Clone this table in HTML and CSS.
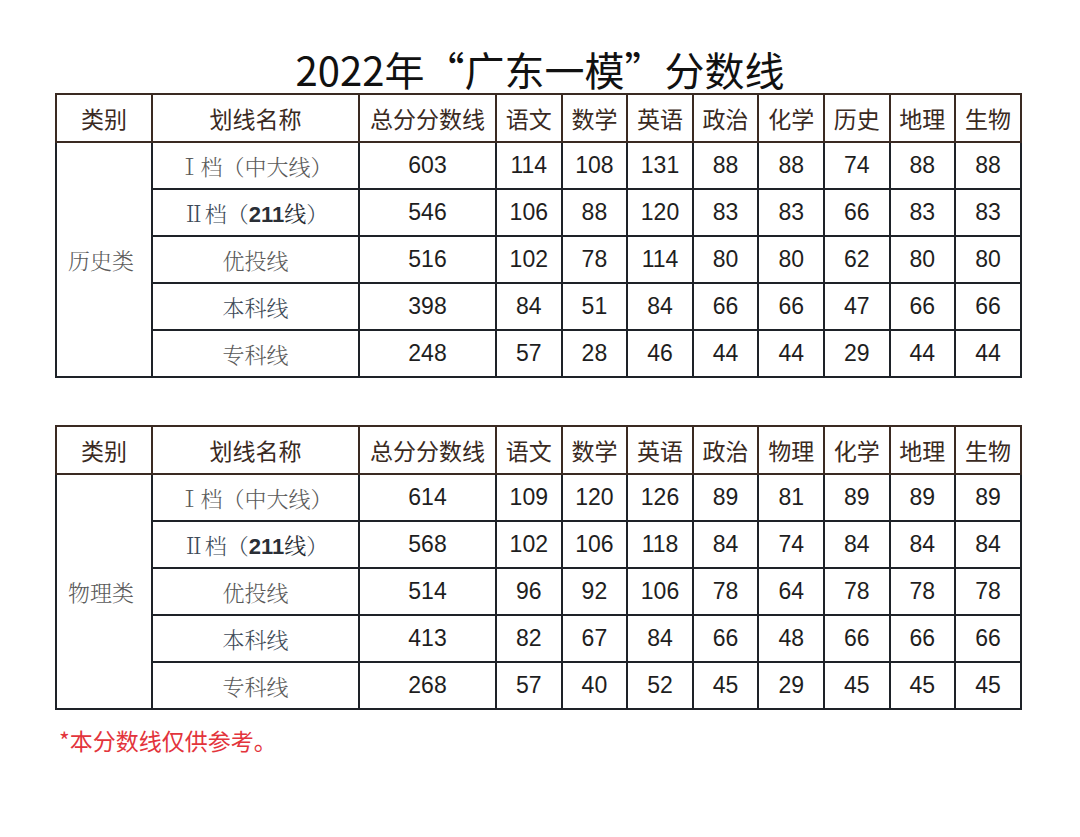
FILE: index.html
```html
<!DOCTYPE html>
<html lang="zh-CN">
<head>
<meta charset="utf-8">
<title>2022年“广东一模”分数线</title>
<link rel="stylesheet" href="styles.css">
</head>
<body>
<div class="page">
  <h1 class="title">2022年“广东一模”分数线</h1>

  <table class="score">
    <colgroup>
      <col class="c-cat"><col class="c-name"><col class="c-total">
      <col class="c-s"><col class="c-s"><col class="c-s"><col class="c-s"><col class="c-s"><col class="c-s"><col class="c-s"><col class="c-s">
    </colgroup>
    <thead>
      <tr><th>类别</th><th>划线名称</th><th>总分分数线</th><th>语文</th><th>数学</th><th>英语</th><th>政治</th><th>化学</th><th>历史</th><th>地理</th><th>生物</th></tr>
    </thead>
    <tbody>
      <tr><td class="cat" rowspan="5">历史类</td><td class="name">Ⅰ档（中大线）</td><td>603</td><td>114</td><td>108</td><td>131</td><td>88</td><td>88</td><td>74</td><td>88</td><td>88</td></tr>
      <tr><td class="name dark">Ⅱ档（<b>211</b><span class="dk">线</span>）</td><td>546</td><td>106</td><td>88</td><td>120</td><td>83</td><td>83</td><td>66</td><td>83</td><td>83</td></tr>
      <tr><td class="name">优投线</td><td>516</td><td>102</td><td>78</td><td>114</td><td>80</td><td>80</td><td>62</td><td>80</td><td>80</td></tr>
      <tr><td class="name dark">本科线</td><td>398</td><td>84</td><td>51</td><td>84</td><td>66</td><td>66</td><td>47</td><td>66</td><td>66</td></tr>
      <tr><td class="name">专科线</td><td>248</td><td>57</td><td>28</td><td>46</td><td>44</td><td>44</td><td>29</td><td>44</td><td>44</td></tr>
    </tbody>
  </table>

  <table class="score second">
    <colgroup>
      <col class="c-cat"><col class="c-name"><col class="c-total">
      <col class="c-s"><col class="c-s"><col class="c-s"><col class="c-s"><col class="c-s"><col class="c-s"><col class="c-s"><col class="c-s">
    </colgroup>
    <thead>
      <tr><th>类别</th><th>划线名称</th><th>总分分数线</th><th>语文</th><th>数学</th><th>英语</th><th>政治</th><th>物理</th><th>化学</th><th>地理</th><th>生物</th></tr>
    </thead>
    <tbody>
      <tr><td class="cat" rowspan="5">物理类</td><td class="name">Ⅰ档（中大线）</td><td>614</td><td>109</td><td>120</td><td>126</td><td>89</td><td>81</td><td>89</td><td>89</td><td>89</td></tr>
      <tr><td class="name dark">Ⅱ档（<b>211</b><span class="dk">线</span>）</td><td>568</td><td>102</td><td>106</td><td>118</td><td>84</td><td>74</td><td>84</td><td>84</td><td>84</td></tr>
      <tr><td class="name">优投线</td><td>514</td><td>96</td><td>92</td><td>106</td><td>78</td><td>64</td><td>78</td><td>78</td><td>78</td></tr>
      <tr><td class="name dark">本科线</td><td>413</td><td>82</td><td>67</td><td>84</td><td>66</td><td>48</td><td>66</td><td>66</td><td>66</td></tr>
      <tr><td class="name">专科线</td><td>268</td><td>57</td><td>40</td><td>52</td><td>45</td><td>29</td><td>45</td><td>45</td><td>45</td></tr>
    </tbody>
  </table>

  <p class="note">*本分数线仅供参考。</p>
</div>
</body>
</html>
```

FILE: styles.css
```css
html, body {
  margin: 0;
  padding: 0;
  background: #ffffff;
}

.page {
  width: 1080px;
  height: 837px;
  padding-top: 45px;
  box-sizing: border-box;
  font-family: "Noto Sans CJK SC", "Liberation Sans", sans-serif;
}

.title {
  margin: 0;
  height: 48px;
  line-height: 48px;
  font-size: 40px;
  font-weight: 400;
  color: #111111;
  text-align: center;
  letter-spacing: 0;
}

.score {
  margin-left: 55px;
  width: 965px;
  table-layout: fixed;
  border-collapse: collapse;
  border: 2px solid #1c1c1c;
}

.second {
  margin-top: 47px;
}

.c-cat { width: 96px; }
.c-name { width: 207px; }
.c-total { width: 137px; }
.c-s { width: 65.6px; }

.score th {
  height: 46px;
  padding: 0;
  border: 2px solid #3a2a22;
  font-size: 23px;
  font-weight: 400;
  color: #3a2a22;
  text-align: center;
  white-space: nowrap;
  font-family: "Noto Sans CJK SC", sans-serif;
}

.score td {
  height: 45px;
  padding: 0;
  border: 2px solid #1e2228;
  font-family: "Liberation Sans", "Noto Sans CJK SC", sans-serif;
  font-size: 23px;
  color: #1e1e1e;
  text-align: center;
  white-space: nowrap;
}

.score td.cat,
.score td.name {
  font-family: "Noto Serif CJK SC", "Noto Sans CJK SC", serif;
  font-weight: 300;
  font-size: 22px;
  color: #5a5a5a;
}

.score td.cat {
  padding-right: 6px;
}

.score td.name.dark {
  color: #3d4a58;
}

.score td.name b {
  font-family: "Liberation Sans", sans-serif;
  font-weight: 700;
  color: #2a2f36;
}

.score td.name .dk {
  color: #2a2f36;
  font-weight: 400;
}

.note {
  margin: 14px 0 0 59px;
  font-size: 23px;
  line-height: 32px;
  color: #e3343c;
  font-family: "Noto Sans CJK SC", sans-serif;
}
```
